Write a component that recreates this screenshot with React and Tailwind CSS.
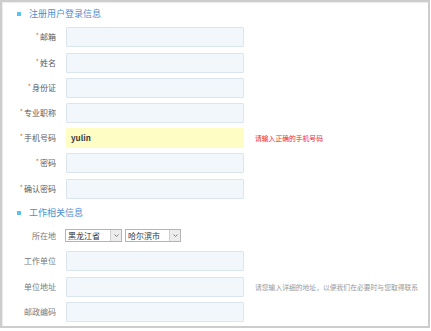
import React from 'react';

const font = { fontFamily: '"Noto Sans CJK SC", "Noto Sans", sans-serif' };

const Star = () => <span className="text-[#f0603c] text-[7px] mr-[1px] relative -top-[2px]">*</span>;

const SectionTitle = ({ children, className = '' }) => (
  <div className={`flex items-center pl-[15px] ${className}`}>
    <span className="w-[4px] h-[4px] bg-[#5bc2ea] mr-[8px]" />
    <span className="text-[9px] leading-none text-[#4b8fd2]">{children}</span>
  </div>
);

const Field = ({ label, required, value, yellow, note, noteRed, className = '' }) => (
  <div className={`flex items-center h-[20px] ${className}`}>
    <div className={`w-[54px] text-right text-[8px] leading-none ${required ? 'text-[#5a5a5a]' : 'text-[#7a7a7a]'}`}>
      {required && <Star />}
      {label}
    </div>
    <div
      className={`ml-[10px] w-[178px] h-[20px] rounded-[1px] border flex items-center px-[4px] ${
        yellow ? 'bg-[#fdfdc4] border-[#fdfdc4]' : 'bg-[#f2f7fc] border-[#dbe5ee]'
      }`}
    >
      {value && <span className="text-[8px] font-bold text-[#3a3a3a] leading-none">{value}</span>}
    </div>
    {note && (
      <span className={`ml-[11px] text-[6.8px] leading-none whitespace-nowrap ${noteRed ? 'text-[#f0262e]' : 'text-[#9a9a9a]'}`}>
        {note}
      </span>
    )}
  </div>
);

const Select = ({ text, w }) => (
  <div className={`${w} h-[13px] border border-[#b4b4b4] bg-white flex items-stretch`}>
    <span className="flex-1 text-[8px] leading-[11px] pl-[2px] text-[#333]">{text}</span>
    <span className="w-[11px] border-l border-[#cfcfcf] bg-[#ececec] flex items-center justify-center">
      <svg width="5" height="3" viewBox="0 0 5 3">
        <path d="M0.5 0.5 L2.5 2.5 L4.5 0.5" fill="none" stroke="#666" strokeWidth="0.8" />
      </svg>
    </span>
  </div>
);

export default function App() {
  return (
    <div className="w-[431px] h-[331px] bg-white" style={font}>
      <div className="w-[430px] h-[328px] border-[2px] border-[#cdcdcd] shadow-[inset_1px_1px_1px_rgba(0,0,0,0.08)] bg-white">
        <SectionTitle className="pt-[7px]">注册用户登录信息</SectionTitle>
        <div className="flex flex-col mt-[9px]">
          <Field label="邮箱" required />
          <Field label="姓名" required className="mt-[6px]" />
          <Field label="身份证" required className="mt-[5px]" />
          <Field label="专业职称" required className="mt-[5px]" />
          <Field label="手机号码" required value="yulin" yellow note="请输入正确的手机号码" noteRed className="mt-[5px]" />
          <Field label="密码" required className="mt-[5px]" />
          <Field label="确认密码" required className="mt-[6px]" />
        </div>
        <SectionTitle className="mt-[9px]">工作相关信息</SectionTitle>
        <div className="flex items-center mt-[12px] h-[13px]">
          <div className="w-[54px] text-right text-[8px] leading-none text-[#7a7a7a]">所在地</div>
          <div className="ml-[9px] flex gap-[3px]">
            <Select text="黑龙江省" w="w-[57px]" />
            <Select text="哈尔滨市" w="w-[56px]" />
          </div>
        </div>
        <div className="flex flex-col mt-[9px]">
          <Field label="工作单位" />
          <Field label="单位地址" note="请您输入详细的地址，以便我们在必要时与您取得联系" className="mt-[6px]" />
          <Field label="邮政编码" className="mt-[5px]" />
        </div>
      </div>
    </div>
  );
}
